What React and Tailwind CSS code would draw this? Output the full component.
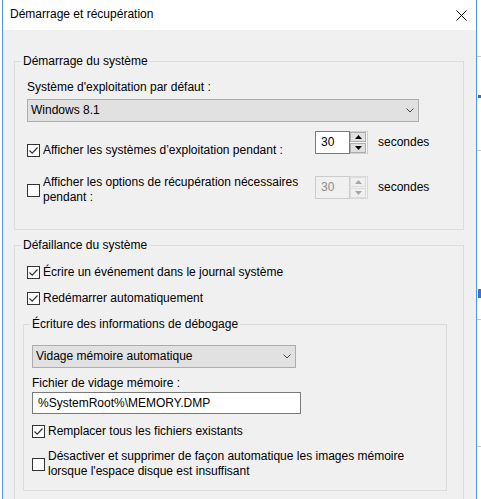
import React from 'react';

// petite case à cocher façon Windows 10
const Checkbox = ({ checked }) => (
  <span className="w-[13px] h-[13px] shrink-0 border border-[#333333] bg-white flex items-center justify-center">
    {checked && (
      <svg width="11" height="11" viewBox="0 0 11 11">
        <path d="M1.5 5.5 L4.2 8.2 L9.5 2.5" fill="none" stroke="#333333" strokeWidth="1.2" />
      </svg>
    )}
  </span>
);

const CheckRow = ({ checked, children, className = '' }) => (
  <div className={`flex items-center gap-[3px] ${className}`}>
    <Checkbox checked={checked} />
    <span>{children}</span>
  </div>
);

const Combo = ({ text, className = '' }) => (
  <div className={`h-[23px] border border-[#adadad] bg-[#e1e1e1] flex items-center justify-between pl-[3px] pr-[4px] ${className}`}>
    <span>{text}</span>
    <svg width="8" height="5" viewBox="0 0 8 5">
      <path d="M0.5 0.5 L4 4 L7.5 0.5" fill="none" stroke="#444444" strokeWidth="1" />
    </svg>
  </div>
);

const Arrow = ({ up, color }) => (
  <svg width="7" height="4" viewBox="0 0 7 4">
    <path d={up ? 'M0 4 L3.5 0 L7 4 Z' : 'M0 0 L3.5 4 L7 0 Z'} fill={color} />
  </svg>
);

const Spin = ({ value, disabled, className = '' }) => (
  <div className={`flex h-[23px] w-[53px] shrink-0 ${className}`}>
    <div
      className={`w-[35px] h-full border flex items-center pl-[5px] ${
        disabled ? 'border-[#cccccc] bg-[#f0f0f0] text-[#8d8d8d]' : 'border-[#7a7a7a] bg-white'
      }`}
    >
      {value}
    </div>
    <div
      className={`w-[18px] h-full border-y border-r flex flex-col gap-[1px] py-0 pr-[1px] ${
        disabled ? 'border-[#d9d9d9] bg-[#f0f0f0]' : 'border-[#cfcfcf] bg-[#f7f7f7]'
      }`}
    >
      <div className={`flex-1 border flex items-center justify-center ${disabled ? 'border-[#dcdcdc] bg-[#f0f0f0]' : 'border-[#adadad] bg-[#e1e1e1]'}`}>
        <Arrow up color={disabled ? '#a6a6a6' : '#000000'} />
      </div>
      <div className={`flex-1 border flex items-center justify-center ${disabled ? 'border-[#dcdcdc] bg-[#f0f0f0]' : 'border-[#adadad] bg-[#e1e1e1]'}`}>
        <Arrow color={disabled ? '#a6a6a6' : '#000000'} />
      </div>
    </div>
  </div>
);

export default function App() {
  return (
    <div className="relative w-[481px] h-[499px] overflow-hidden bg-white text-black text-[12px] leading-[15px] font-['Liberation_Sans',Arial,sans-serif]">
      {/* fenêtre en arrière-plan, visible sur le bord droit */}
      <div className="absolute left-[477px] top-[56px] w-[4px] h-px bg-[#c8c8c8]" />
      <div className="absolute left-[478px] top-[95px] w-[3px] h-[3px] bg-[#2a72c4]" />
      <div className="absolute left-[477px] top-[150px] w-[4px] h-px bg-[#c8c8c8]" />
      <div className="absolute left-[478px] top-[289px] w-[3px] h-[9px] bg-[#3b6fd0]" />
      <div className="absolute left-[477px] top-[319px] w-[4px] h-px bg-[#c8c8c8]" />
      <div className="absolute left-[477px] top-[446px] w-[4px] h-px bg-[#c8c8c8]" />

      <div className="ml-[2px] w-[475px] h-full border-x border-[#4c97e0] flex flex-col">
        {/* Title bar */}
        <div className="h-[30px] shrink-0 bg-white flex items-start justify-between pl-[7px] pr-[9px]">
          <span className="mt-[7px]">Démarrage et récupération</span>
          <svg className="mt-[10px]" width="11" height="11" viewBox="0 0 11 11">
            <path d="M0.5 0.5 L10.5 10.5 M10.5 0.5 L0.5 10.5" stroke="#000000" strokeWidth="1" />
          </svg>
        </div>

        <div className="flex-1 bg-[#f0f0f0] pt-[24px] pl-[11px]">
          {/* Démarrage du système */}
          <fieldset className="w-[450px] border border-[#dcdcdc]">
            <legend className="ml-[6px] px-[2px]">Démarrage du système</legend>
            <div className="pl-[12px] pt-[11px] pb-[24px]">
              <div>Système d'exploitation par défaut :</div>
              <Combo text="Windows 8.1" className="w-[392px] mt-[4px]" />

              <div className="flex items-start mt-[9px]">
                <CheckRow checked className="w-[288px] pt-[12px]">
                  Afficher les systèmes d’exploitation pendant :
                </CheckRow>
                <Spin value="30" />
                <span className="ml-[10px] mt-[4px]">secondes</span>
              </div>

              <div className="flex items-start mt-[17px]">
                <CheckRow className="w-[288px]">
                  Afficher les options de récupération nécessaires
                  <br />
                  pendant :
                </CheckRow>
                <Spin value="30" disabled className="mt-[1px]" />
                <span className="ml-[10px] mt-[5px]">secondes</span>
              </div>
            </div>
          </fieldset>

          {/* Défaillance du système */}
          <fieldset className="w-[450px] border border-[#dcdcdc] mt-[8px]">
            <legend className="ml-[6px] px-[2px]">Défaillance du système</legend>
            <div className="pl-[8px] pt-[12px] pb-[12px]">
              <CheckRow checked className="ml-[4px]">
                Écrire un événement dans le journal système
              </CheckRow>
              <CheckRow checked className="ml-[4px] mt-[11px]">
                Redémarrer automatiquement
              </CheckRow>

              <fieldset className="w-[424px] border border-[#dcdcdc] mt-[11px]">
                <legend className="ml-[6px] px-[2px]">Écriture des informations de débogage</legend>
                <div className="pl-[8px] pt-[13px] pb-[11px]">
                  <Combo text="Vidage mémoire automatique" className="w-[264px]" />
                  <div className="mt-[8px]">Fichier de vidage mémoire :</div>
                  <div className="mt-[1px] w-[269px] h-[22px] border border-[#7a7a7a] bg-white flex items-center pl-[5px]">
                    %SystemRoot%\MEMORY.DMP
                  </div>
                  <CheckRow checked className="mt-[10px]">
                    Remplacer tous les fichiers existants
                  </CheckRow>
                  <CheckRow className="mt-[10px]">
                    Désactiver et supprimer de façon automatique les images mémoire
                    <br />
                    lorsque l'espace disque est insuffisant
                  </CheckRow>
                </div>
              </fieldset>
            </div>
          </fieldset>
        </div>
      </div>
    </div>
  );
}
